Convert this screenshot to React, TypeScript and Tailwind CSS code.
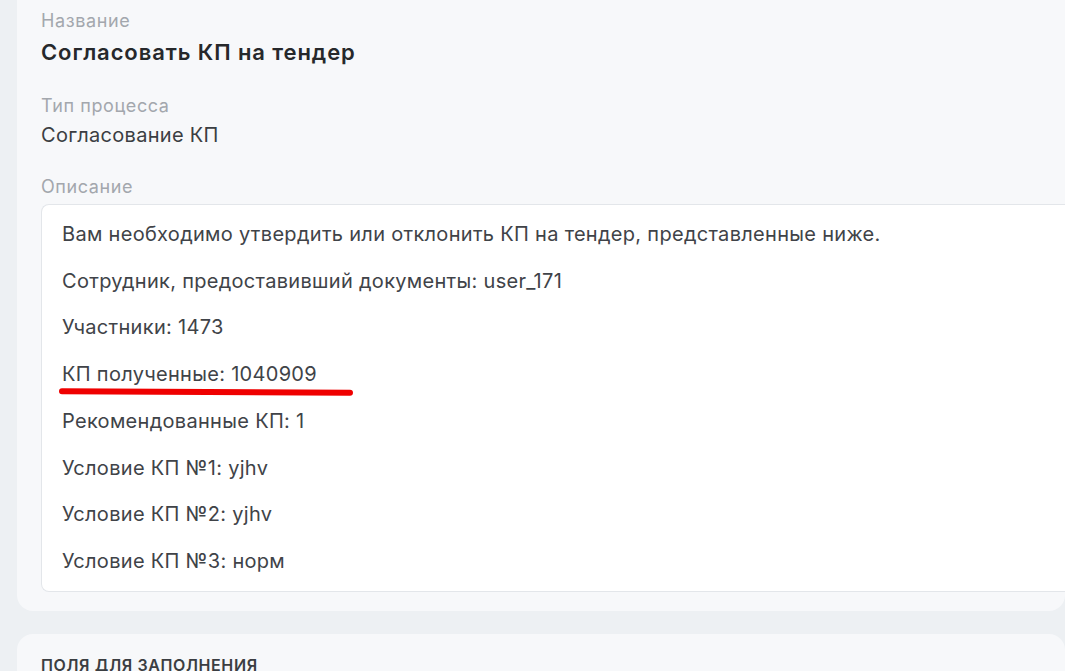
const lines = [
  "Вам необходимо утвердить или отклонить КП на тендер, представленные ниже.",
  "Сотрудник, предоставивший документы: user_171",
  "Участники: 1473",
  "КП полученные: 1040909",
  "Рекомендованные КП: 1",
  "Условие КП №1: yjhv",
  "Условие КП №2: yjhv",
  "Условие КП №3: норм",
];

export default function App() {
  return (
    <div
      className="h-[671px] w-[1065px] overflow-hidden bg-[#edf0f3] pl-[17px]"
      style={{ fontFamily: "Inter, 'Noto Sans', sans-serif" }}
    >
      <section className="-mt-4 rounded-b-2xl bg-[#f7f8fa] pb-[19px] pl-6 pt-[25px]">
        <div className="text-[18px] leading-6 tracking-[0.6px] text-[#a3a7ad]">Название</div>
        <div className="mt-[5px] text-[22px] font-semibold leading-7 tracking-[0.9px] text-[#26282b]">
          Согласовать КП на тендер
        </div>

        <div className="mt-[28px] text-[18px] leading-6 tracking-[0.6px] text-[#a3a7ad]">
          Тип процесса
        </div>
        <div className="mt-[5px] text-[20px] leading-6 tracking-[0.3px] text-[#3b3e42]">
          Согласование КП
        </div>

        <div className="mt-[28px] text-[18px] leading-6 tracking-[0.6px] text-[#a3a7ad]">Описание</div>
        <div className="mt-[5px] rounded-l-lg border border-r-0 border-[#e3e6ea] bg-white pb-[6px] pl-5 pt-[6px]">
          {lines.map((line, i) => (
            <div
              key={line}
              className="relative py-[11px] text-[20px] leading-[24.7px] tracking-[0.3px] text-[#404348]"
            >
              {line}
              {i === 3 && (
                <span className="absolute left-[-3px] top-[38px] h-[6px] w-[294px] rotate-[0.3deg] rounded-full bg-[#ef0000]" />
              )}
            </div>
          ))}
        </div>
      </section>

      <section className="mt-[23px] h-[60px] rounded-t-2xl bg-[#f7f8fa] pl-6 pt-[19px]">
        <div className="text-[16px] font-semibold uppercase leading-6 tracking-[0.6px] text-[#3b3e42]">
          Поля для заполнения
        </div>
      </section>
    </div>
  );
}
